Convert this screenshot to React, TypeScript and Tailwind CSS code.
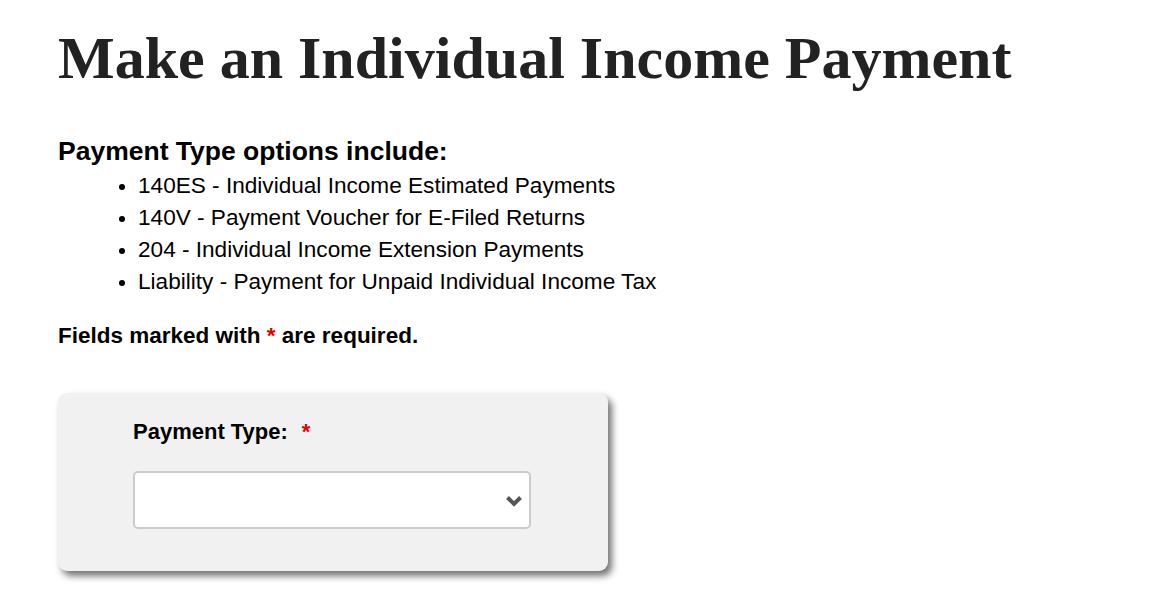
export default function App() {
  const options = [
    "140ES - Individual Income Estimated Payments",
    "140V - Payment Voucher for E-Filed Returns",
    "204 - Individual Income Extension Payments",
    "Liability - Payment for Unpaid Individual Income Tax",
  ];

  return (
    <div className="min-h-[612px] bg-white px-[58px] pt-[28px] font-['Liberation_Sans',Arial,sans-serif] text-black">
      <h1 className="font-['Liberation_Serif','Times_New_Roman',serif] text-[60px] font-bold leading-[60px] text-[#222]">
        Make an Individual Income Payment
      </h1>

      <h2 className="mt-[48px] text-[26.5px] font-bold leading-[30px]">
        Payment Type options include:
      </h2>
      <ul className="mt-[4px] list-disc pl-[80px] text-[22.6px] leading-[32px] marker:text-[20px] marker:leading-[0px]">
        {options.map((o) => (
          <li key={o} className="h-[32px]">
            {o}
          </li>
        ))}
      </ul>

      <p className="mt-[24px] text-[22.5px] font-bold leading-[28px]">
        Fields marked with <span className="text-[#d00]">*</span> are required.
      </p>

      <div className="mt-[43px] h-[178px] w-[550px] rounded-[9px] bg-[#f1f1f1] pl-[75px] pt-[25px] shadow-[4px_5px_7px_rgba(0,0,0,0.55)]">
        <label className="block text-[22px] font-bold leading-[28px]">
          Payment Type:
          <span className="ml-[14px] text-[#d00]">*</span>
        </label>
        <div className="relative mt-[25px] h-[58px] w-[398px]">
          <select className="h-full w-full appearance-none rounded-[5px] border-2 border-[#ccc] bg-white px-3 text-[20px] outline-none">
            <option value=""></option>
            {options.map((o) => (
              <option key={o}>{o}</option>
            ))}
          </select>
          <svg
            className="pointer-events-none absolute right-[8px] top-[24px]"
            width="18"
            height="12"
            viewBox="0 0 18 12"
          >
            <path
              d="M2.5 2.5 L9 9 L15.5 2.5"
              fill="none"
              stroke="#555"
              strokeWidth="4"
              strokeLinecap="butt"
              strokeLinejoin="miter"
            />
          </svg>
        </div>
      </div>
    </div>
  );
}
